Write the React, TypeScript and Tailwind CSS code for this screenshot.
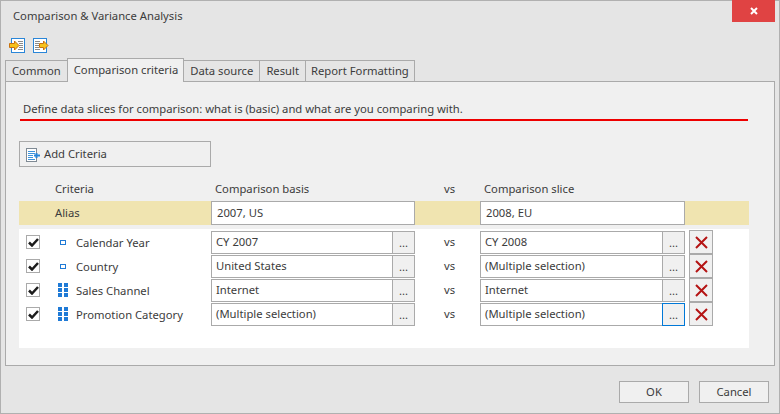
const rows = [
  { name: "Calendar Year", icon: "attr", basis: "CY 2007", slice: "CY 2008" },
  { name: "Country", icon: "attr", basis: "United States", slice: "(Multiple selection)" },
  { name: "Sales Channel", icon: "hier", basis: "Internet", slice: "Internet" },
  { name: "Promotion Category", icon: "hier", basis: "(Multiple selection)", slice: "(Multiple selection)", focused: true },
];

const tabs = ["Common", "Comparison criteria", "Data source", "Result", "Report Formatting"];

const gridCols = "grid w-[730px] grid-cols-[192px_204px_65px_205px_28px]";

const ImportIcon = () => (
  <svg width="16" height="15" viewBox="0 0 16 15">
    <rect x="2.5" y="0.5" width="13" height="14" fill="#fff" stroke="#2a86d8" />
    <path d="M9 3.5h5M10 5.5h4M10 7.5h4M10 9.5h4M9 11.5h5" stroke="#8a8a8a" />
    <path d="M0.5 5.5h5v-2.5l4.5 4.5-4.5 4.5v-2.5h-5z" fill="#f6c21c" stroke="#c8720e" />
  </svg>
);

const ExportIcon = () => (
  <svg width="16" height="15" viewBox="0 0 16 15">
    <rect x="0.5" y="0.5" width="13" height="14" fill="#fff" stroke="#2a86d8" />
    <path d="M2 3.5h5M2 5.5h4M2 7.5h4M2 9.5h4M2 11.5h5" stroke="#8a8a8a" />
    <path d="M6.5 5.5h4v-2.5l4.5 4.5-4.5 4.5v-2.5h-4z" fill="#f6c21c" stroke="#c8720e" />
  </svg>
);

const AddIcon = () => (
  <svg width="14" height="14" viewBox="0 0 14 14">
    <rect x="0.5" y="0.5" width="10" height="13" fill="#fff" stroke="#7f8a94" />
    <path d="M2 3.5h7M2 5.5h7M2 7.5h5M2 9.5h5M2 11.5h7" stroke="#3d94dc" />
    <path d="M10.5 5v5M8 7.5h6" stroke="#2a86d8" strokeWidth="2" />
  </svg>
);

const AttrIcon = () => (
  <span className="block h-[5px] w-[6px] border border-[#1f7ad6] bg-white" />
);

const HierIcon = () => (
  <span className="grid grid-cols-[4px_4px] gap-x-[2px] gap-y-[1px]">
    {[0, 1, 2, 3, 4, 5].map((i) => (
      <span key={i} className="block h-[4px] bg-[#1f7ad6]" />
    ))}
  </span>
);

const Check = () => (
  <span className="flex h-[14px] w-[14px] items-center justify-center border border-[#aaaaaa] bg-white">
    <svg width="11" height="9" viewBox="0 0 11 9">
      <path d="M1 4.5l3 3 6-6.5" fill="none" stroke="#1c1c1c" strokeWidth="2.5" />
    </svg>
  </span>
);

const LookupInput = ({ value, focused }: { value: string; focused?: boolean }) => (
  <div className="flex h-[23px]">
    <div className="flex min-w-0 flex-1 items-center border border-r-0 border-[#aaaaaa] bg-white pl-[4px]">{value}</div>
    <button
      type="button"
      className={
        focused
          ? "flex w-[23px] items-end justify-center border border-[#0078d7] bg-[#f0f0f0] pb-[2px] leading-[16px]"
          : "flex w-[23px] items-end justify-center border border-[#aaaaaa] bg-[#f0f0f0] pb-[2px] leading-[16px]"
      }
    >
      ...
    </button>
  </div>
);

export default function App() {
  return (
    <div className="flex h-[414px] w-[780px] flex-col border border-[#b0b0b0] bg-[#e5e5e5] font-['Noto_Sans','Open_Sans',sans-serif] text-[11.25px] text-[#3c3c3c]">
      <div className="flex h-[29px] items-start justify-between pl-[12px] pr-[4px]">
        <span className="pt-[6px] leading-[18px]">Comparison &amp; Variance Analysis</span>
        <button type="button" className="-mt-px flex h-[22px] w-[43px] items-center justify-center bg-[#e04343]">
          <svg width="8" height="8" viewBox="0 0 8 8">
            <path d="M1 1l6 6M7 1l-6 6" stroke="#fff" strokeWidth="2" />
          </svg>
        </button>
      </div>

      <div className="flex h-[27px] items-start gap-[8px] pl-[8px] pt-[8px]">
        <ImportIcon />
        <ExportIcon />
      </div>

      <div className="flex h-[24px] items-end pl-[4px]">
        {tabs.map((tab) =>
          tab === "Comparison criteria" ? (
            <div key={tab} className="relative z-10 -mb-px -ml-px flex h-[24px] items-center border border-b-0 border-[#aaaaaa] bg-[#f0f0f0] pl-[6px] pr-[5px]">
              {tab}
            </div>
          ) : (
            <div key={tab} className="-ml-px flex h-[21px] items-center border border-b-0 border-[#aaaaaa] bg-[#e5e5e5] px-[6px] first:ml-0 last:px-[5px]">
              {tab}
            </div>
          ),
        )}
      </div>

      <div className="mx-[4px] h-[285px] border border-[#aaaaaa] bg-[#f0f0f0] px-[13px]">
        <p className="ml-[4px] mt-[18px] leading-[18px]">Define data slices for comparison: what is (basic) and what are you comparing with.</p>
        <div className="ml-px mt-px h-[2px] w-[728px] bg-[#ee0000]" />

        <button type="button" className="mt-[20px] flex h-[26px] w-[192px] items-center gap-[4px] border border-[#aaaaaa] bg-[#f0f0f0] pl-[6px] pt-px">
          <AddIcon />
          Add Criteria
        </button>

        <div className={`${gridCols} mb-[2px] mt-[12px] h-[20px] items-center`}>
          <span className="pl-[36px]">Criteria</span>
          <span className="pl-[4px]">Comparison basis</span>
          <span className="pl-[29px]">vs</span>
          <span className="pl-[4px]">Comparison slice</span>
        </div>

        <div className="grid h-[24px] w-[730px] grid-cols-[192px_204px_65px_205px_64px] bg-[#f0e4b0]">
          <span className="flex items-center pl-[36px]">Alias</span>
          <div className="flex items-center border border-[#aaaaaa] bg-white pl-[5px]">2007, US</div>
          <span />
          <div className="flex items-center border border-[#aaaaaa] bg-white pl-[5px]">2008, EU</div>
          <span />
        </div>

        <div className="mt-[4px] h-[119px] w-[730px] bg-white pt-px">
          {rows.map((row) => (
            <div key={row.name} className={`${gridCols} h-[24px] items-center`}>
              <div className="flex items-center">
                <span className="ml-[7px]">
                  <Check />
                </span>
                <span className="flex w-[36px] justify-center pl-[10px]">
                  {row.icon === "attr" ? <AttrIcon /> : <HierIcon />}
                </span>
                <span className="pt-[2px]">{row.name}</span>
              </div>
              <LookupInput value={row.basis} />
              <span className="pl-[29px] pt-px">vs</span>
              <LookupInput value={row.slice} focused={row.focused} />
              <button type="button" className="ml-[4px] flex h-[24px] w-[24px] items-center justify-center border border-[#aaaaaa] bg-[#f0f0f0]">
                <svg width="13" height="13" viewBox="0 0 13 13">
                  <path d="M1 1l11 11M12 1l-11 11" stroke="#b51414" strokeWidth="2" />
                </svg>
              </button>
            </div>
          ))}
        </div>
      </div>

      <div className="mt-[15px] flex justify-end gap-[10px] pr-[10px]">
        <button type="button" className="h-[22px] w-[70px] border border-[#aaaaaa] bg-[#f0f0f0]">OK</button>
        <button type="button" className="h-[22px] w-[70px] border border-[#aaaaaa] bg-[#f0f0f0]">Cancel</button>
      </div>
    </div>
  );
}
